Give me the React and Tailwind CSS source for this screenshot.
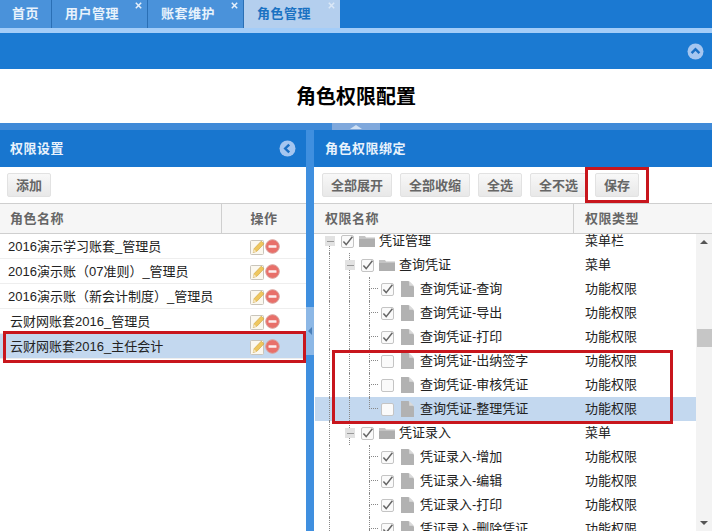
import React from "react";

const FONT = "[font-family:'Liberation_Sans','Noto_Sans_CJK_SC',sans-serif]";

const TABS = [
  { label: "首页", width: "w-[52px]", pad: "pl-3" },
  { label: "用户管理", width: "w-[96px]", pad: "pl-[13px]", close: true },
  { label: "账套维护", width: "w-[96px]", pad: "pl-[13px]", close: true },
  { label: "角色管理", width: "w-[96px]", pad: "pl-[13px]", close: true, active: true },
];

const ROLES = [
  { name: "2016演示学习账套_管理员" },
  { name: "2016演示账（07准则）_管理员" },
  { name: "2016演示账（新会计制度）_管理员" },
  { name: "云财网账套2016_管理员", pad: "pl-[10px]" },
  { name: "云财网账套2016_主任会计", pad: "pl-[10px]", selected: true },
];

// guides: 每个缩进列的虚线 full | none
const TREE = [
  { kind: "group", level: 0, label: "凭证管理", type: "菜单栏", checked: true, guides: [] },
  { kind: "group", level: 1, label: "查询凭证", type: "菜单", checked: true, guides: ["full"], below: true },
  { kind: "leaf", label: "查询凭证-查询", type: "功能权限", checked: true, guides: ["full", "full"] },
  { kind: "leaf", label: "查询凭证-导出", type: "功能权限", checked: true, guides: ["full", "full"] },
  { kind: "leaf", label: "查询凭证-打印", type: "功能权限", checked: true, guides: ["full", "full"] },
  { kind: "leaf", label: "查询凭证-出纳签字", type: "功能权限", guides: ["full", "full"] },
  { kind: "leaf", label: "查询凭证-审核凭证", type: "功能权限", guides: ["full", "full"] },
  { kind: "leaf", label: "查询凭证-整理凭证", type: "功能权限", guides: ["full", "full"], last: true, selected: true },
  { kind: "group", level: 1, label: "凭证录入", type: "菜单", checked: true, guides: ["full"], below: true },
  { kind: "leaf", label: "凭证录入-增加", type: "功能权限", checked: true, guides: ["full", "none"] },
  { kind: "leaf", label: "凭证录入-编辑", type: "功能权限", checked: true, guides: ["full", "none"] },
  { kind: "leaf", label: "凭证录入-打印", type: "功能权限", checked: true, guides: ["full", "none"] },
  { kind: "leaf", label: "凭证录入-删除凭证", type: "功能权限", checked: true, guides: ["full", "none"] },
];

function CircleChevron({ dir = "left" }) {
  return (
    <svg width="17" height="17" viewBox="0 0 17 17">
      <circle cx="8.5" cy="8.5" r="8" fill="#a5c6f0" />
      <path
        d={dir === "left" ? "M10.2 4.6 6.2 8.5l4 3.9" : "M4.6 10.2l3.9-4 3.9 4"}
        fill="none"
        stroke="#1a6fc4"
        strokeWidth="2.4"
      />
    </svg>
  );
}

function CloseMark({ faint }) {
  return (
    <svg width="7" height="7" viewBox="0 0 7 7" className="absolute right-[5px] top-[2px]">
      <path d="M.8.8l5.4 5.4M6.2.8.8 6.2" stroke={faint ? "#dbe8f7" : "#e6f0fb"} strokeWidth="1.5" />
    </svg>
  );
}

function EditIcon() {
  return (
    <svg width="15" height="16" viewBox="0 0 15 16">
      <rect x="0.5" y="1.5" width="13" height="14" rx="1" fill="#fbf8ef" stroke="#c9c5bb" />
      <path d="M4.2 9.6 11.2 2.2l2.8 2.6-7 7.4-3.8 1.4z" fill="#efc75e" stroke="#c9a13f" strokeWidth="0.6" />
      <path d="M2.9 13.6l1.1-3.4 2.6 2.2z" fill="#f3e3c0" />
    </svg>
  );
}

function DeleteIcon() {
  return (
    <svg width="15" height="15" viewBox="0 0 15 15">
      <circle cx="7.5" cy="7.5" r="6.8" fill="#e8706a" stroke="#d9a09b" />
      <rect x="3.5" y="6.2" width="8" height="2.6" rx="0.5" fill="#fbeeee" />
    </svg>
  );
}

function Checkbox({ checked }) {
  return (
    <span className="flex h-[13px] w-[13px] shrink-0 items-center justify-center rounded-[2px] border border-[#c4c4c4] bg-[#fafafa]">
      {checked ? (
        <svg width="13" height="13" viewBox="0 0 13 13" className="shrink-0">
          <path d="M2.4 6.4 5.2 9.6 11.4 1.8" fill="none" stroke="#666" strokeWidth="1.5" />
        </svg>
      ) : null}
    </span>
  );
}

function FolderIcon() {
  return (
    <svg width="16" height="12" viewBox="0 0 16 12" className="shrink-0">
      <path d="M0 1h6l1 1.6h9V4H0z" fill="#c4c4c4" />
      <path d="M0 4h16v8H0z" fill="#aeaeae" />
    </svg>
  );
}

function FileIcon() {
  return (
    <svg width="13" height="16" viewBox="0 0 13 16" className="shrink-0">
      <path d="M0 0h7.5L13 5.5V16H0z" fill="#b2b2b2" />
      <path d="M8.2 0 13 4.8H8.2z" fill="#dadada" />
    </svg>
  );
}

function Guide({ mode }) {
  return (
    <span className="flex h-6 w-5 shrink-0 flex-col">
      {mode !== "none" ? <span className="ml-1 h-6 border-l border-dotted border-[#888]" /> : null}
    </span>
  );
}

function Expander({ level, below }) {
  return (
    <span className="flex h-6 w-4 shrink-0 flex-col">
      <span className={`ml-1 h-[7px] ${level > 0 ? "border-l border-dotted border-[#888]" : ""}`} />
      <span className="flex h-[10px] w-[10px] items-center justify-center bg-[#e2e2e2]">
        <span className="h-px w-[7px] bg-[#999]" />
      </span>
      <span className={`ml-1 h-[7px] ${below || level === 0 ? "border-l border-dotted border-[#888]" : ""}`} />
    </span>
  );
}

function Connector({ last }) {
  return (
    <span className="flex h-6 w-4 shrink-0 flex-col">
      <span className="ml-1 h-3 w-[9px] border-b border-l border-dotted border-[#888]" />
      {last ? null : <span className="ml-1 h-3 border-l border-dotted border-[#888]" />}
    </span>
  );
}

function TreeRow({ row }) {
  return (
    <div className={`flex h-6 items-center ${row.selected ? "bg-[#c3d8ef]" : ""}`}>
      <div className="flex h-6 w-[258px] shrink-0 items-center pl-[10px]">
        {row.guides.map((mode, i) => (
          <Guide key={i} mode={mode} />
        ))}
        {row.kind === "group" ? (
          <>
            <Expander level={row.level} below={row.below} />
            <Checkbox checked={row.checked} />
            <span className="ml-[5px]">
              <FolderIcon />
            </span>
            <span className="ml-1">{row.label}</span>
          </>
        ) : (
          <>
            <Connector last={row.last} />
            <Checkbox checked={row.checked} />
            <span className="ml-[7px]">
              <FileIcon />
            </span>
            <span className="ml-[6px]">{row.label}</span>
          </>
        )}
      </div>
      <div className="pl-3">{row.type}</div>
    </div>
  );
}

function ToolButton({ children }) {
  return (
    <button className="h-6 rounded-[2px] border border-[#e2e2e2] bg-gradient-to-b from-[#f8f8f8] to-[#e8e8e8] px-2 text-[13px] leading-none font-bold text-[#666]">
      {children}
    </button>
  );
}

function PanelTitle({ children, icon, className = "" }) {
  return (
    <div className={`flex h-[37px] shrink-0 items-center justify-between bg-[#1876cf] text-[13px] font-bold tracking-[0.5px] text-[#e8f2fc] ${className}`}>
      <span>{children}</span>
      {icon}
    </div>
  );
}

export default function App() {
  return (
    <div className={`relative flex h-[531px] w-[712px] flex-col overflow-hidden bg-white text-[13px] text-[#222] ${FONT}`}>
      {/* 顶部标签 */}
      <div className="flex h-7 bg-[#1b79d2]">
        {TABS.map((t) => (
          <div
            key={t.label}
            className={`relative flex items-center text-[13px] font-bold tracking-[0.5px] ${t.width} ${t.pad} ${
              t.active
                ? "bg-[#b4cfee] text-[#1a72c2]"
                : "border-r border-[#2a6fb5] bg-[#4a92da] text-[#e8f2fc]"
            }`}
          >
            {t.label}
            {t.close ? <CloseMark faint={t.active} /> : null}
          </div>
        ))}
      </div>
      <div className="h-[5px] bg-[#a4cdf8]" />

      <div className="flex h-9 items-center justify-end bg-[#1b7ad2] pr-2">
        <CircleChevron dir="up" />
      </div>

      <div className="flex h-[54px] items-center justify-center bg-white pt-px text-xl leading-none font-bold text-black">
        角色权限配置
      </div>

      <div className="flex h-[7px] justify-center bg-[#3f8ad8]">
        <div className="flex w-12 items-center justify-center bg-[#7fa8dc]">
          <span className="h-0 w-0 border-x-[6px] border-b-[4px] border-x-transparent border-b-[#cfe0f4]" />
        </div>
      </div>

      <div className="flex min-h-0 flex-1">
        {/* 左侧：权限设置 */}
        <div className="relative w-[306px] shrink-0">
          <PanelTitle className="pr-[10px] pl-[10px]" icon={<CircleChevron dir="left" />}>
            权限设置
          </PanelTitle>
          <div className="flex h-[36px] items-center pl-[7px]">
            <ToolButton>添加</ToolButton>
          </div>
          <div className="flex h-[31px] border-y border-[#cfcfcf] bg-[#f6f6f6] font-bold tracking-[0.5px] text-[#666]">
            <div className="flex w-[222px] items-center border-r border-[#cfcfcf] pl-[10px]">角色名称</div>
            <div className="flex flex-1 items-center justify-center">操作</div>
          </div>
          {ROLES.map((r) => (
            <div
              key={r.name}
              className={`flex h-[25px] items-center border-b border-[#eeeeee] pt-px ${r.selected ? "bg-[#c3d8ef]" : ""}`}
            >
              <div className={`w-[250px] shrink-0 whitespace-nowrap ${r.pad ?? "pl-2"}`}>{r.name}</div>
              <div className="flex items-center">
                <EditIcon />
                <DeleteIcon />
              </div>
            </div>
          ))}
          <div className="pointer-events-none absolute top-[201px] left-[3px] h-8 w-[303px] border-[3px] border-[#c8161d]" />
        </div>

        {/* 分隔条 */}
        <div className="flex w-2 shrink-0 flex-col bg-[#3f8fdf] pt-[177px]">
          <div className="flex h-12 items-center justify-center bg-[#8db8e6]">
            <span className="h-0 w-0 border-y-[4px] border-r-[4px] border-y-transparent border-r-[#4a7fb8]" />
          </div>
        </div>

        {/* 右侧：角色权限绑定 */}
        <div className="relative flex min-w-0 flex-1 flex-col">
          <PanelTitle className="pl-[11px]">角色权限绑定</PanelTitle>
          <div className="flex h-[36px] shrink-0 items-center gap-2 pl-2">
            <ToolButton>全部展开</ToolButton>
            <ToolButton>全部收缩</ToolButton>
            <ToolButton>全选</ToolButton>
            <ToolButton>全不选</ToolButton>
            <ToolButton>保存</ToolButton>
          </div>
          <div className="flex h-[31px] shrink-0 border-y border-[#cfcfcf] bg-[#f6f6f6] font-bold tracking-[0.5px] text-[#666]">
            <div className="flex w-[260px] items-center border-r border-[#cfcfcf] pl-[11px]">权限名称</div>
            <div className="flex flex-1 items-center pl-[11px]">权限类型</div>
          </div>
          <div className="flex min-h-0 flex-1">
            <div className="min-w-0 flex-1 overflow-hidden pl-px">
              <div className="-mt-[5px] whitespace-nowrap">
                {TREE.map((row) => (
                  <TreeRow key={row.label} row={row} />
                ))}
              </div>
            </div>
            <div className="flex w-4 shrink-0 flex-col bg-[#f3f3f3]">
              <div className="flex h-4 items-center justify-center">
                <span className="h-0 w-0 border-x-[4px] border-b-[4px] border-x-transparent border-b-[#555]" />
              </div>
              <div className="flex-1 pt-[79px] pl-px">
                <div className="h-[18px] bg-[#c6c6c6]" />
              </div>
              <div className="flex h-4 items-center justify-center">
                <span className="h-0 w-0 border-x-[4px] border-t-[4px] border-x-transparent border-t-[#555]" />
              </div>
            </div>
          </div>
          <div className="pointer-events-none absolute top-[37px] left-[271px] h-[36px] w-[64px] border-[3px] border-[#c8161d]" />
          <div className="pointer-events-none absolute top-[220px] left-[18px] h-[74px] w-[341px] border-[3px] border-[#c8161d]" />
        </div>
      </div>
    </div>
  );
}
